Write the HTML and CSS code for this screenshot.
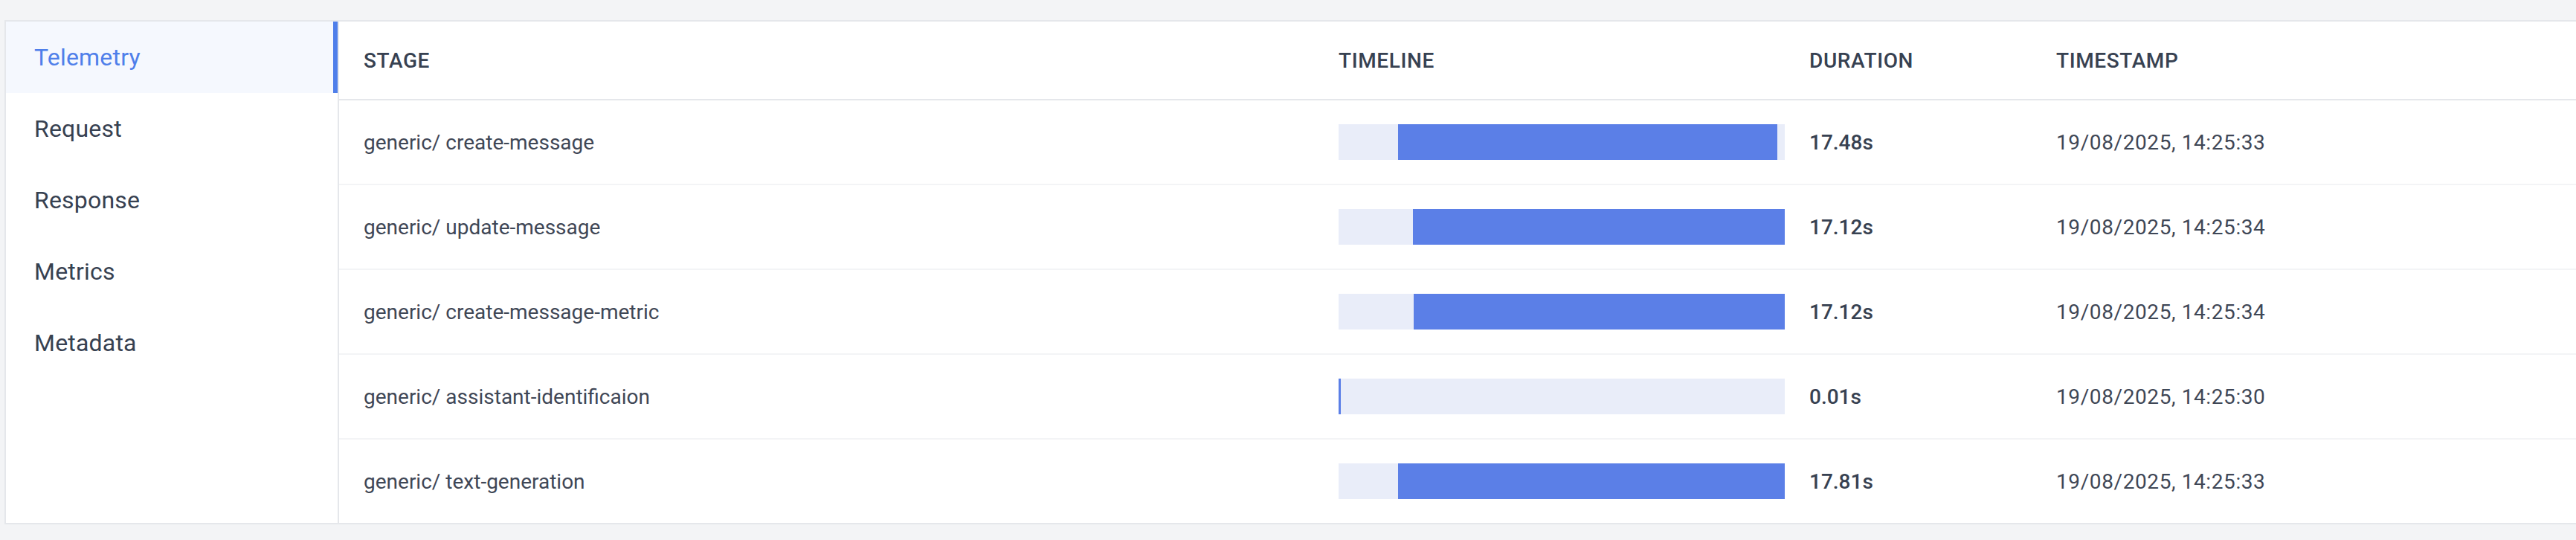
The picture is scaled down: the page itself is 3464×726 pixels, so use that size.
FILE: index.html
```html
<!DOCTYPE html>
<html lang="en">
<head>
<meta charset="utf-8">
<title>Telemetry</title>
<link rel="stylesheet" href="styles.css">
</head>
<body>
<div class="card">
  <nav class="sidebar">
    <div class="nav-item active">Telemetry</div>
    <div class="nav-item">Request</div>
    <div class="nav-item">Response</div>
    <div class="nav-item">Metrics</div>
    <div class="nav-item">Metadata</div>
  </nav>
  <div class="table">
    <div class="row head">
      <div class="cell">STAGE</div>
      <div class="cell">TIMELINE</div>
      <div class="cell">DURATION</div>
      <div class="cell">TIMESTAMP</div>
    </div>
    <div class="row">
      <div class="cell stage">generic/ create-message</div>
      <div class="cell"><div class="track"><div class="fill" style="margin-left:13.33%;width:85%"></div></div></div>
      <div class="cell dur">17.48s</div>
      <div class="cell ts">19/08/2025, 14:25:33</div>
    </div>
    <div class="row">
      <div class="cell stage">generic/ update-message</div>
      <div class="cell"><div class="track"><div class="fill" style="margin-left:16.67%;width:83.33%"></div></div></div>
      <div class="cell dur">17.12s</div>
      <div class="cell ts">19/08/2025, 14:25:34</div>
    </div>
    <div class="row">
      <div class="cell stage">generic/ create-message-metric</div>
      <div class="cell"><div class="track"><div class="fill" style="margin-left:16.83%;width:83.17%"></div></div></div>
      <div class="cell dur">17.12s</div>
      <div class="cell ts">19/08/2025, 14:25:34</div>
    </div>
    <div class="row">
      <div class="cell stage">generic/ assistant-identificaion</div>
      <div class="cell"><div class="track"><div class="fill" style="margin-left:0;width:3px"></div></div></div>
      <div class="cell dur">0.01s</div>
      <div class="cell ts">19/08/2025, 14:25:30</div>
    </div>
    <div class="row last">
      <div class="cell stage">generic/ text-generation</div>
      <div class="cell"><div class="track"><div class="fill" style="margin-left:13.33%;width:86.67%"></div></div></div>
      <div class="cell dur">17.81s</div>
      <div class="cell ts">19/08/2025, 14:25:33</div>
    </div>
  </div>
</div>
</body>
</html>
```

FILE: styles.css
```css
html, body {
  margin: 0;
  padding: 0;
}
body {
  background: #f3f4f6;
  padding: 27px 0 0 6px;
  font-family: Roboto, "Liberation Sans", sans-serif;
  color: #374151;
  overflow: hidden;
}
.card {
  display: flex;
  background: #ffffff;
  border: 2px solid #e5e7eb;
  border-right: none;
  height: 674px;
}
.sidebar {
  width: 446px;
  flex: none;
  border-right: 2px solid #e5e7eb;
}
.nav-item {
  height: 96px;
  display: flex;
  align-items: center;
  padding-left: 38px;
  font-size: 32px;
  letter-spacing: 0.2px;
  color: #374151;
}
.nav-item.active {
  background: #f5f8fe;
  color: #4f7fea;
  box-shadow: inset -6px 0 0 #4f7fea;
}
.table {
  flex: 1;
  display: flex;
  flex-direction: column;
}
.row {
  display: grid;
  grid-template-columns: 1311px 633px 332px 1fr;
  height: 112px;
  border-bottom: 2px solid #f3f4f6;
  align-items: center;
  font-size: 28px;
}
.row.last {
  border-bottom: none;
}
.row.head {
  height: 104px;
  border-bottom: 2px solid #e5e7eb;
  font-weight: 500;
  letter-spacing: 0.6px;
  color: #374151;
}
.cell {
  padding-left: 33px;
  white-space: nowrap;
}
.stage {
  color: #3f4756;
}
.ts {
  color: #3f4756;
  letter-spacing: 0.6px;
}
.dur {
  font-weight: 500;
  color: #374151;
}
.track {
  width: 600px;
  height: 48px;
  background: #e9edf9;
  display: flex;
}
.fill {
  height: 100%;
  background: #5b7fe7;
}
```
